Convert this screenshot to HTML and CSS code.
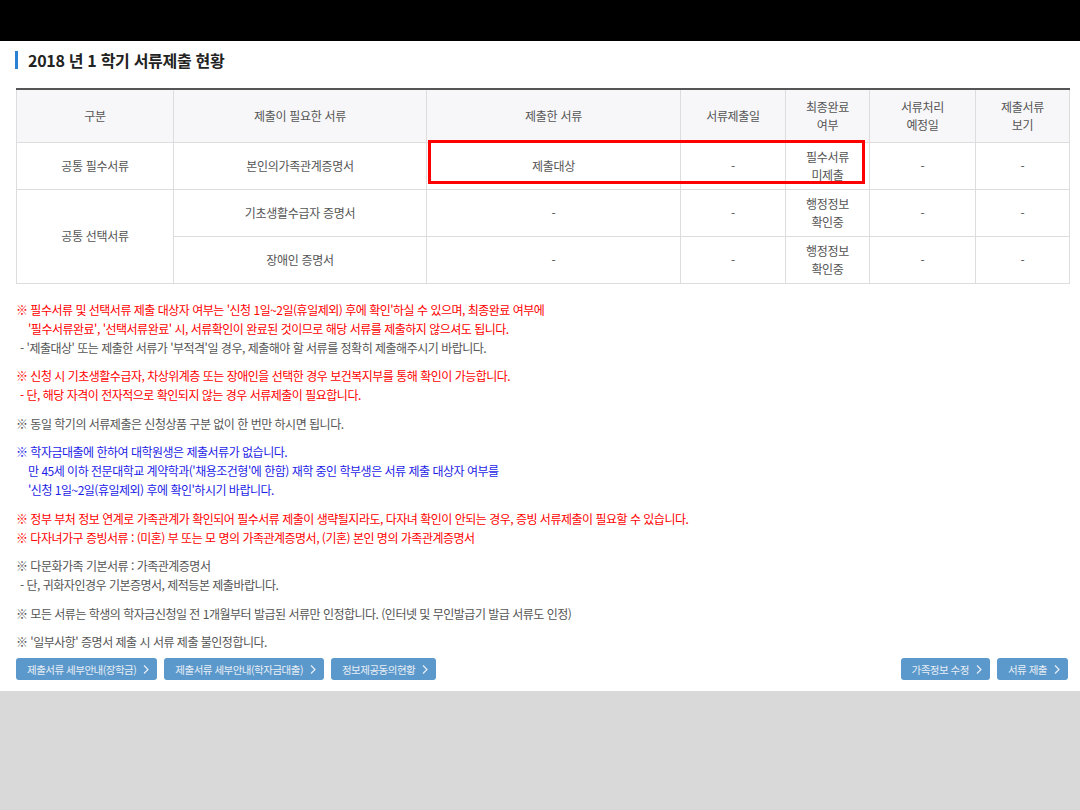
FILE: index.html
```html
<!DOCTYPE html>
<html lang="ko">
<head>
  <meta charset="UTF-8">
  <title>서류제출 현황</title>
  <link rel="stylesheet" href="styles.css">
</head>
<body>
  <div class="top-bar"></div>

  <div class="content">
    <h2 class="page-title">2018 년 1 학기 서류제출 현황</h2>

    <!-- 서류제출 현황 표 -->
    <div class="table-wrap">
      <table class="doc-table">
        <colgroup>
          <col style="width:157px">
          <col style="width:253px">
          <col style="width:254px">
          <col style="width:105px">
          <col style="width:84px">
          <col style="width:106px">
          <col>
        </colgroup>
        <thead>
          <tr>
            <th>구분</th>
            <th>제출이 필요한 서류</th>
            <th>제출한 서류</th>
            <th>서류제출일</th>
            <th>최종완료<br>여부</th>
            <th>서류처리<br>예정일</th>
            <th>제출서류<br>보기</th>
          </tr>
        </thead>
        <tbody>
          <tr>
            <td>공통 필수서류</td>
            <td>본인의가족관계증명서</td>
            <td>제출대상</td>
            <td>-</td>
            <td>필수서류<br>미제출</td>
            <td>-</td>
            <td>-</td>
          </tr>
          <tr>
            <td rowspan="2">공통 선택서류</td>
            <td>기초생활수급자 증명서</td>
            <td>-</td>
            <td>-</td>
            <td>행정정보<br>확인중</td>
            <td>-</td>
            <td>-</td>
          </tr>
          <tr>
            <td>장애인 증명서</td>
            <td>-</td>
            <td>-</td>
            <td>행정정보<br>확인중</td>
            <td>-</td>
            <td>-</td>
          </tr>
        </tbody>
      </table>
      <div class="highlight-box"></div>
    </div>

    <!-- 안내 문구 -->
    <div class="notes">
      <div class="group">
        <div class="line red">※ 필수서류 및 선택서류 제출 대상자 여부는 '신청 1일~2일(휴일제외) 후에 확인'하실 수 있으며, 최종완료 여부에</div>
        <div class="line red indent">'필수서류완료', '선택서류완료' 시, 서류확인이 완료된 것이므로 해당 서류를 제출하지 않으셔도 됩니다.</div>
        <div class="line gray sub">- '제출대상' 또는 제출한 서류가 '부적격'일 경우, 제출해야 할 서류를 정확히 제출해주시기 바랍니다.</div>
      </div>

      <div class="group">
        <div class="line red">※ 신청 시 기초생활수급자, 차상위계층 또는 장애인을 선택한 경우 보건복지부를 통해 확인이 가능합니다.</div>
        <div class="line red sub">- 단, 해당 자격이 전자적으로 확인되지 않는 경우 서류제출이 필요합니다.</div>
      </div>

      <div class="group">
        <div class="line gray">※ 동일 학기의 서류제출은 신청상품 구분 없이 한 번만 하시면 됩니다.</div>
      </div>

      <div class="group">
        <div class="line blue">※ 학자금대출에 한하여 대학원생은 제출서류가 없습니다.</div>
        <div class="line blue indent">만 45세 이하 전문대학교 계약학과('채용조건형'에 한함) 재학 중인 학부생은 서류 제출 대상자 여부를</div>
        <div class="line blue indent">'신청 1일~2일(휴일제외) 후에 확인'하시기 바랍니다.</div>
      </div>

      <div class="group">
        <div class="line red">※ 정부 부처 정보 연계로 가족관계가 확인되어 필수서류 제출이 생략될지라도, 다자녀 확인이 안되는 경우, 증빙 서류제출이 필요할 수 있습니다.</div>
        <div class="line red">※ 다자녀가구 증빙서류 : (미혼) 부 또는 모 명의 가족관계증명서, (기혼) 본인 명의 가족관계증명서</div>
      </div>

      <div class="group">
        <div class="line gray">※ 다문화가족 기본서류 : 가족관계증명서</div>
        <div class="line gray sub">- 단, 귀화자인경우 기본증명서, 제적등본 제출바랍니다.</div>
      </div>

      <div class="group">
        <div class="line gray">※ 모든 서류는 학생의 학자금신청일 전 1개월부터 발급된 서류만 인정합니다. (인터넷 및 무인발급기 발급 서류도 인정)</div>
      </div>

      <div class="group">
        <div class="line gray">※ '일부사항' 증명서 제출 시 서류 제출 불인정합니다.</div>
      </div>
    </div>

    <!-- 버튼 영역 -->
    <div class="btn-row">
      <div class="btn-group">
        <a class="btn" href="#">제출서류 세부안내(장학금) <svg width="6" height="9" viewBox="0 0 6 9"><path d="M1 0.5 L5 4.5 L1 8.5" fill="none" stroke="currentColor" stroke-width="1.2"/></svg></a>
        <a class="btn" href="#">제출서류 세부안내(학자금대출) <svg width="6" height="9" viewBox="0 0 6 9"><path d="M1 0.5 L5 4.5 L1 8.5" fill="none" stroke="currentColor" stroke-width="1.2"/></svg></a>
        <a class="btn" href="#">정보제공동의현황 <svg width="6" height="9" viewBox="0 0 6 9"><path d="M1 0.5 L5 4.5 L1 8.5" fill="none" stroke="currentColor" stroke-width="1.2"/></svg></a>
      </div>
      <div class="btn-group">
        <a class="btn" href="#">가족정보 수정 <svg width="6" height="9" viewBox="0 0 6 9"><path d="M1 0.5 L5 4.5 L1 8.5" fill="none" stroke="currentColor" stroke-width="1.2"/></svg></a>
        <a class="btn" href="#">서류 제출 <svg width="6" height="9" viewBox="0 0 6 9"><path d="M1 0.5 L5 4.5 L1 8.5" fill="none" stroke="currentColor" stroke-width="1.2"/></svg></a>
      </div>
    </div>
  </div>
</body>
</html>
```

FILE: styles.css
```css
* {
  box-sizing: border-box;
  margin: 0;
  padding: 0;
}

body {
  background: #d9d9d9;
  font-family: "Noto Sans CJK KR", "Noto Sans", sans-serif;
  font-size: 12px;
  color: #555;
}

.top-bar {
  height: 41px;
  background: #000;
}

.content {
  background: #fff;
  padding: 10px 10px 11px 16px;
}

/* 제목 */
.page-title {
  margin-left: -1px;
  border-left: 3px solid #2a80d2;
  padding-left: 10px;
  height: 18px;
  line-height: 18px;
  font-size: 16px;
  font-weight: bold;
  color: #222;
  letter-spacing: -0.3px;
}

/* 표 */
.table-wrap {
  position: relative;
  margin-top: 19px;
}

.doc-table {
  width: 1054px;
  border-collapse: collapse;
  table-layout: fixed;
  border-top: 2px solid #555;
}

.doc-table th,
.doc-table td {
  border: 1px solid #ddd;
  text-align: center;
  vertical-align: middle;
  line-height: 18px;
  font-weight: normal;
  color: #555;
  letter-spacing: -0.3px;
}

.doc-table th {
  background: #f7f7f9;
  height: 53px;
}

.doc-table td {
  height: 47px;
}

.highlight-box {
  position: absolute;
  left: 412px;
  top: 52px;
  width: 437px;
  height: 44px;
  border: 3px solid #f00;
}

/* 안내 문구 */
.notes {
  margin-top: 16px;
  letter-spacing: -0.5px;
}

.notes .group + .group {
  margin-top: 9.5px;
}

.notes .line {
  height: 19px;
  line-height: 19px;
  white-space: nowrap;
}

.notes .red { color: #f00; }
.notes .blue { color: #1c1ce6; }
.notes .gray { color: #555; }

.notes .indent {
  padding-left: 12px;
}

.notes .sub {
  padding-left: 4px;
}

/* 버튼 */
.btn-row {
  display: flex;
  justify-content: space-between;
  margin-top: 7px;
  padding-right: 2px;
}

.btn-group {
  display: flex;
  gap: 7px;
}

.btn {
  display: flex;
  align-items: center;
  gap: 7px;
  height: 22px;
  padding: 0 8px 0 11px;
  background: #5b99cc;
  border-radius: 3px;
  color: #e8eef5;
  font-size: 10.5px;
  text-decoration: none;
  letter-spacing: -0.5px;
}
```
